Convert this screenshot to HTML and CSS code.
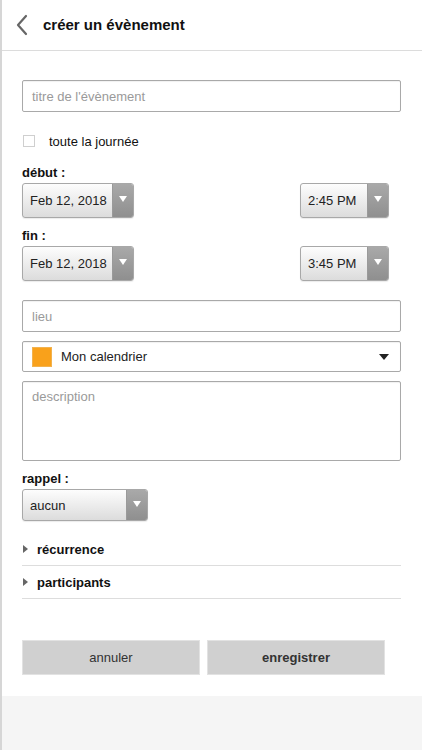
FILE: index.html
```html
<!DOCTYPE html>
<html lang="fr">
<head>
<meta charset="utf-8">
<title>créer un évènement</title>
<link rel="stylesheet" href="styles.css">
</head>
<body>
<div class="app">
  <header class="header">
    <svg class="back" width="14" height="22" viewBox="0 0 14 22"><path d="M11 2 L3 11 L11 20" fill="none" stroke="#666" stroke-width="2.2" stroke-linecap="round" stroke-linejoin="round"/></svg>
    <h1 class="title">créer un évènement</h1>
  </header>
  <main class="form">
    <div class="input title-input"><span class="ph">titre de l'évènement</span></div>
    <div class="check-row"><span class="checkbox"></span><span class="check-label">toute la journée</span></div>
    <div class="label l-debut">début :</div>
    <div class="pair">
      <div class="select date"><span class="sv">Feb 12, 2018</span><span class="arrow"><i></i></span></div>
      <div class="select time"><span class="sv">2:45 PM</span><span class="arrow"><i></i></span></div>
    </div>
    <div class="label l-fin">fin :</div>
    <div class="pair">
      <div class="select date"><span class="sv">Feb 12, 2018</span><span class="arrow"><i></i></span></div>
      <div class="select time"><span class="sv">3:45 PM</span><span class="arrow"><i></i></span></div>
    </div>
    <div class="input lieu"><span class="ph">lieu</span></div>
    <div class="input cal"><span class="swatch"></span><span class="cal-name">Mon calendrier</span><span class="caret"></span></div>
    <div class="input desc"><span class="ph">description</span></div>
    <div class="label l-rappel">rappel :</div>
    <div class="select rappel"><span class="sv">aucun</span><span class="arrow"><i></i></span></div>
    <div class="section first"><span class="tri"></span><span class="sec-label">récurrence</span></div>
    <div class="section"><span class="tri"></span><span class="sec-label">participants</span></div>
    <div class="buttons">
      <div class="btn">annuler</div>
      <div class="btn primary">enregistrer</div>
    </div>
  </main>
  <footer class="footer"></footer>
</div>
</body>
</html>
```

FILE: styles.css
```css
* { box-sizing: border-box; }
html, body { margin: 0; padding: 0; }
body {
  font-family: "Liberation Sans", Arial, sans-serif;
  color: #111;
  background: #fff;
}
.app {
  width: 422px;
  height: 750px;
  border-left: 2px solid #d6d6d6;
  display: flex;
  flex-direction: column;
  overflow: hidden;
}
.header {
  height: 51px;
  border-bottom: 1px solid #dcdcdc;
  display: flex;
  align-items: center;
  padding-left: 13px;
  flex-shrink: 0;
}
.back { display: block; margin-top: -1px; }
.title {
  margin: -2px 0 0 14px;
  font-size: 15px;
  font-weight: bold;
  color: #111;
}
.form {
  padding: 0 21px 0 20px;
  flex: 1;
  display: flex;
  flex-direction: column;
}
.input {
  border: 1px solid #a9a9a9;
  border-radius: 2px;
  box-shadow: inset 0 1px 1px rgba(0,0,0,0.06);
  display: flex;
  align-items: center;
  padding-left: 9px;
  font-size: 13px;
}
.ph { color: #9a9a9a; }
.title-input { margin-top: 29px; height: 32px; }
.check-row {
  display: flex;
  align-items: center;
  margin-top: 22px;
  height: 14px;
}
.checkbox {
  width: 12px;
  height: 12px;
  border: 1px solid #cfcfcf;
  background: #fff;
  margin-left: 1px;
}
.check-label { margin-left: 14px; font-size: 13px; color: #111; }
.label { font-size: 13px; font-weight: bold; height: 15px; line-height: 15px; }
.l-debut { margin-top: 17px; }
.l-fin { margin-top: 10px; }
.l-rappel { margin-top: 10px; }
.pair {
  display: flex;
  justify-content: space-between;
  padding-right: 12px;
  margin-top: 3px;
}
.select {
  display: flex;
  height: 35px;
  border: 1px solid #a8a8a8;
  border-radius: 3px;
  overflow: hidden;
  background: linear-gradient(#fdfdfd, #dcdcdc);
  box-shadow: 0 1px 1px rgba(0,0,0,0.08);
}
.select .sv {
  flex: 1;
  display: flex;
  align-items: center;
  padding-left: 7px;
  font-size: 13px;
  color: #222;
  white-space: nowrap;
}
.select .arrow {
  width: 21px;
  flex-shrink: 0;
  background: linear-gradient(#a9a9a9, #8f8f8f);
  display: flex;
  align-items: center;
  justify-content: center;
  border-left: 1px solid #9a9a9a;
}
.select .arrow i {
  width: 0;
  height: 0;
  border-left: 4px solid transparent;
  border-right: 4px solid transparent;
  border-top: 6px solid #fff;
  margin-top: -3px;
}
.date { width: 112px; }
.time { width: 89px; }
.lieu { margin-top: 19px; height: 32px; }
.cal { margin-top: 9px; height: 31px; padding-right: 11px; }
.swatch {
  width: 20px;
  height: 20px;
  background: #f9a11b;
  border: 1px solid #f2b24e;
  flex-shrink: 0;
}
.cal-name { margin-left: 9px; color: #222; flex: 1; }
.caret {
  width: 0;
  height: 0;
  border-left: 5px solid transparent;
  border-right: 5px solid transparent;
  border-top: 6px solid #222;
}
.desc { margin-top: 9px; height: 80px; align-items: flex-start; padding-top: 7px; }
.rappel { width: 126px; height: 32px; margin-top: 3px; }
.section {
  height: 33px;
  display: flex;
  align-items: center;
  border-bottom: 1px solid #dddddd;
}
.section.first { margin-top: 12px; }
.tri {
  width: 0;
  height: 0;
  border-top: 4px solid transparent;
  border-bottom: 4px solid transparent;
  border-left: 5px solid #666;
  margin-left: 1px;
}
.sec-label { margin-left: 9px; font-size: 13px; font-weight: bold; color: #111; }
.buttons {
  display: flex;
  gap: 7px;
  margin-top: 41px;
}
.btn {
  width: 178px;
  height: 35px;
  background: #d0d0d0;
  border: 1px solid #e2e2e2;
  display: flex;
  align-items: center;
  justify-content: center;
  font-size: 13px;
  color: #333;
}
.btn.primary { font-weight: bold; }
.footer {
  height: 54px;
  background: #f5f5f5;
  flex-shrink: 0;
}
```
